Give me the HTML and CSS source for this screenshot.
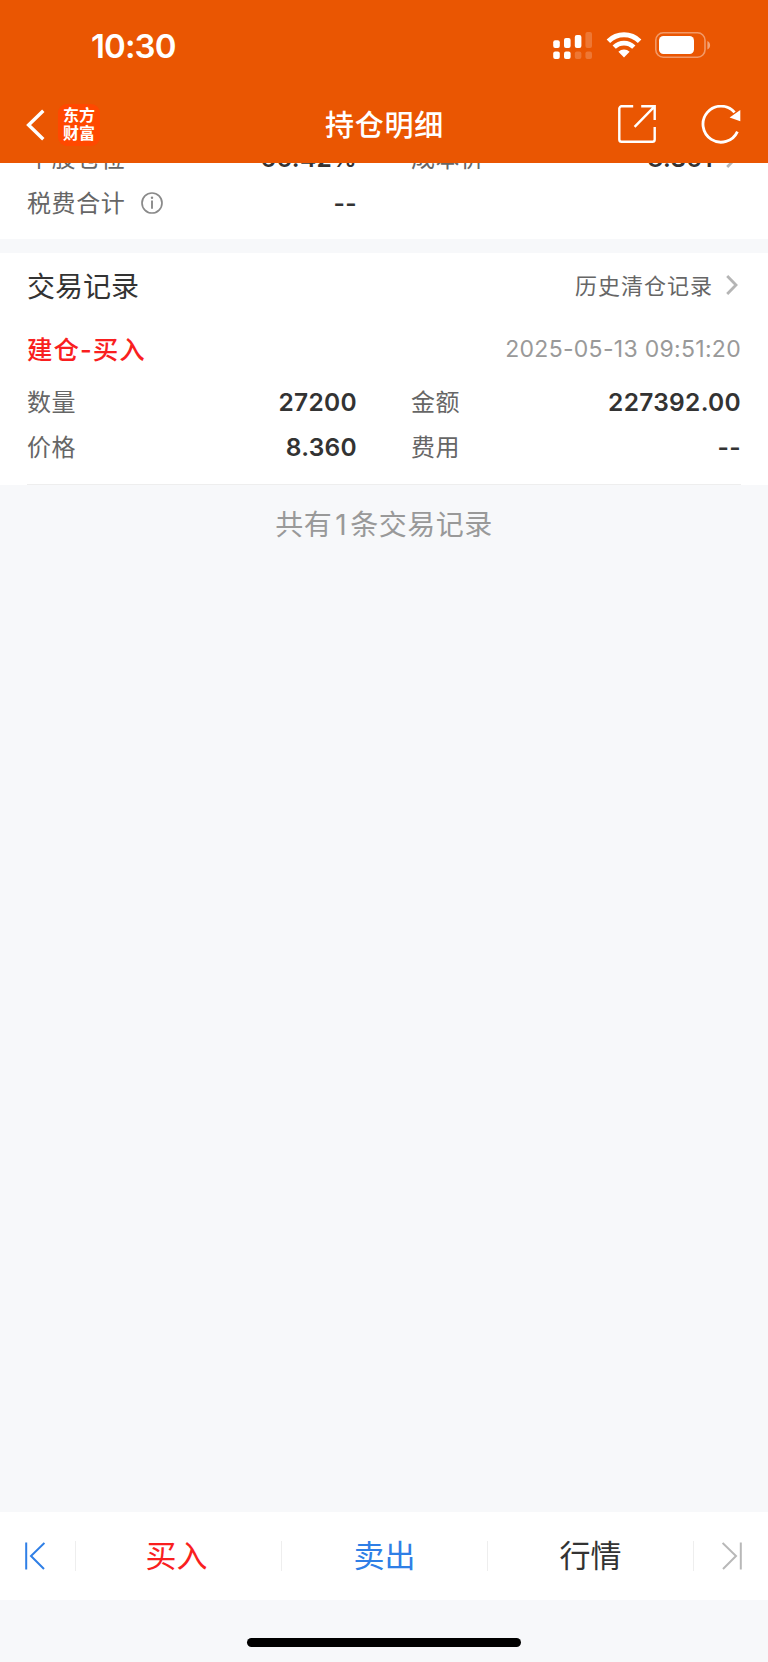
FILE: index.html
```html
<!DOCTYPE html>
<html lang="zh-CN">
<head>
    <meta charset="UTF-8">
    <meta name="viewport" content="width=device-width, initial-scale=1.0">
    <title>持仓明细</title>
    <link rel="stylesheet" href="styles.css">
</head>
<body>
    <div class="page">
        <header class="header">
            <div class="status-bar">
                <span class="time">10:30</span>
                <div class="status-icons">
                    <svg class="signal" width="40" height="28" viewBox="0 0 40 28" fill="#fff">
                        <rect x="0.2" y="8.2" width="6.6" height="7.8" rx="2"/>
                        <rect x="11" y="6" width="6.6" height="10" rx="2"/>
                        <rect x="21.8" y="3" width="6.6" height="13" rx="2"/>
                        <rect x="32.4" y="0" width="6.6" height="16" rx="2" opacity="0.2"/>
                        <rect x="0.2" y="19.6" width="6.6" height="7.4" rx="2"/>
                        <rect x="11" y="19.6" width="6.6" height="7.4" rx="2"/>
                        <rect x="21.8" y="19.6" width="6.6" height="7.4" rx="2" opacity="0.2"/>
                        <rect x="32.4" y="19.6" width="6.6" height="7.4" rx="2" opacity="0.2"/>
                    </svg>
                    <svg class="wifi" width="36" height="26" viewBox="0 0 36 26">
                        <path d="M2.4 9.2a22.2 22.2 0 0 1 31.2 0" fill="none" stroke="#fff" stroke-width="5"/>
                        <path d="M8.2 15.2a13.8 13.8 0 0 1 19.6 0" fill="none" stroke="#fff" stroke-width="4.6"/>
                        <path d="M18 25.4l-5.6-5.6a8.2 8.2 0 0 1 11.2 0z" fill="#fff"/>
                    </svg>
                    <svg class="battery" width="57" height="27" viewBox="0 0 57 27">
                        <rect x="0.8" y="0.8" width="49.2" height="24.4" rx="7.5" fill="none" stroke="#fff" stroke-opacity="0.4" stroke-width="1.6"/>
                        <rect x="4" y="4" width="35" height="18" rx="4.5" fill="#fff"/>
                        <path d="M52.4 9v8.4c3.6-1.4 3.6-7 0-8.4z" fill="#fff" opacity="0.45"/>
                    </svg>
                </div>
            </div>
            <div class="nav-bar">
                <div class="nav-left">
                    <svg width="20" height="32" viewBox="0 0 20 32" fill="none" stroke="#fff" stroke-width="3.4">
                        <path d="M17.3 1.8L2.6 16l14.7 14.2"/>
                    </svg>
                    <div class="logo">东方<br>财富</div>
                </div>
                <h1 class="title">持仓明细</h1>
                <div class="nav-right">
                    <svg width="38" height="38" viewBox="0 0 38 38" fill="none" stroke="#fff" stroke-width="2.4">
                        <path d="M15.2 1.3H3.6a2.3 2.3 0 0 0-2.3 2.3v30.8a2.3 2.3 0 0 0 2.3 2.3h30.8a2.3 2.3 0 0 0 2.3-2.3V22"/>
                        <path d="M23.2 1.3h13.5V15M36.4 1.6L16.6 21.8"/>
                    </svg>
                    <svg class="refresh" width="40" height="39" viewBox="0 0 40 39">
                        <path d="M36.4 26.6A18 18 0 1 1 33.6 7.4" fill="none" stroke="#fff" stroke-width="2.8"/>
                        <path d="M39.3 5v11.2L28.6 12.6z" fill="#fff"/>
                    </svg>
                </div>
            </div>
        </header>

        <main class="content">
            <section class="summary">
                <div class="row">
                    <div class="cell"><span class="label">个股仓位</span><span class="value">66.42%</span></div>
                    <div class="cell">
                        <span class="label">成本价</span>
                        <span class="value">8.361</span>
                        <svg class="arrow" width="12" height="20" viewBox="0 0 12 20" fill="none" stroke="#b5b5b5" stroke-width="2.8">
                            <path d="M1.2 1l8.8 9-8.8 9"/>
                        </svg>
                    </div>
                </div>
                <div class="row">
                    <div class="cell">
                        <span class="label">税费合计</span>
                        <svg class="info" width="22" height="22" viewBox="0 0 22 22">
                            <circle cx="11" cy="11" r="10" fill="none" stroke="#8a8a8a" stroke-width="1.7"/>
                            <circle cx="11" cy="5.8" r="1.2" fill="#8a8a8a"/>
                            <path d="M11 8.6v8.2" stroke="#8a8a8a" stroke-width="1.9"/>
                        </svg>
                        <span class="value">--</span>
                    </div>
                    <div class="cell"></div>
                </div>
            </section>

            <section class="records">
                <div class="records-head">
                    <h2>交易记录</h2>
                    <a class="history"><span>历史清仓记录</span>
                        <svg class="arrow" width="12" height="20" viewBox="0 0 12 20" fill="none" stroke="#b5b5b5" stroke-width="2.8">
                            <path d="M1.2 1l8.8 9-8.8 9"/>
                        </svg>
                    </a>
                </div>
                <div class="record">
                    <div class="record-head">
                        <span class="type">建仓-买入</span>
                        <span class="date">2025-05-13 09:51:20</span>
                    </div>
                    <div class="row">
                        <div class="cell"><span class="label">数量</span><span class="value">27200</span></div>
                        <div class="cell"><span class="label">金额</span><span class="value">227392.00</span></div>
                    </div>
                    <div class="row">
                        <div class="cell"><span class="label">价格</span><span class="value">8.360</span></div>
                        <div class="cell"><span class="label">费用</span><span class="value">--</span></div>
                    </div>
                </div>
            </section>
            <p class="total">共有<span class="count">1</span>条交易记录</p>
        </main>

        <footer class="footer">
            <a class="step">
                <svg width="20" height="28" viewBox="0 0 20 28" fill="none" stroke="#2f7fe6" stroke-width="2">
                    <path d="M1.2 0.5v27M19.4 1L6 14l13 13"/>
                </svg>
            </a>
            <a class="tab buy">买入</a>
            <a class="tab sell">卖出</a>
            <a class="tab">行情</a>
            <a class="step last">
                <svg width="20" height="28" viewBox="0 0 20 28" fill="none" stroke="#b8b8b8" stroke-width="2">
                    <path d="M18.8 0.5v27M0.6 1L14 14L1 27"/>
                </svg>
            </a>
        </footer>
        <div class="home"><div class="home-bar"></div></div>
    </div>
</body>
</html>
```
FILE: styles.css
```css
* {
    box-sizing: border-box;
}
body {
    margin: 0;
    font-family: Inter, "Noto Sans CJK SC", sans-serif;
    background: #f7f8fa;
    color: #333;
}
svg {
    display: block;
    flex: none;
}
.page {
    display: flex;
    flex-direction: column;
    height: 1662px;
}
.header {
    height: 163px;
    background: #ea5602;
    color: #fff;
    flex: none;
}
.status-bar {
    display: flex;
    justify-content: space-between;
    height: 86px;
    padding: 32px 56px 0 91px;
}
.time {
    font-size: 33px;
    font-weight: 600;
    line-height: 29px;
    letter-spacing: -0.9px;
}
.status-icons {
    display: flex;
}
.wifi {
    margin-left: 13px;
}
.battery {
    margin-left: 13px;
}
.nav-bar {
    display: grid;
    grid-template-columns: 1fr auto 1fr;
    align-items: center;
    height: 77px;
    padding: 0 27px 0 26px;
}
.nav-left {
    display: flex;
    align-items: center;
    gap: 12px;
}
.logo {
    width: 42px;
    height: 42px;
    padding-top: 1px;
    border-radius: 9px;
    background: #ff4800;
    font-family: "Noto Sans CJK SC", sans-serif;
    font-size: 16px;
    font-weight: 700;
    line-height: 18px;
    text-align: center;
}
.title {
    margin: 0;
    padding: 0 0 4px 2px;
    font-size: 29px;
    font-weight: 500;
    letter-spacing: 0.8px;
}
.nav-right {
    display: flex;
    justify-content: flex-end;
    gap: 45px;
}
.content {
    flex: 1;
    overflow: hidden;
}
.summary {
    height: 104px;
    margin-top: -28px;
    background: #fff;
}
.row {
    display: grid;
    grid-template-columns: 330px 330px;
    column-gap: 54px;
    padding: 0 27px;
}
.cell {
    display: flex;
    align-items: center;
    height: 45px;
}
.label {
    padding-bottom: 2px;
    color: #666;
    font-size: 24px;
    letter-spacing: 0.6px;
}
.info {
    margin-left: 16px;
}
.value {
    margin-left: auto;
    font-size: 24.5px;
    font-weight: 600;
    letter-spacing: 0.3px;
}
.arrow {
    margin: 0 3px 0 13px;
}
.records {
    margin-top: 14px;
    background: #fff;
}
.records-head {
    display: flex;
    justify-content: space-between;
    align-items: center;
    height: 66px;
    padding: 0 27px 2px;
}
.records-head h2 {
    margin: 0;
    font-size: 28px;
    font-weight: 400;
}
.history {
    display: flex;
    align-items: center;
    color: #666;
    font-size: 22px;
    letter-spacing: 1px;
}
.history span {
    padding-bottom: 3px;
}
.record {
    height: 166px;
}
.record::after {
    content: "";
    display: block;
    height: 1px;
    margin: 15px 27px 0;
    background: #eee;
}
.record-head {
    display: flex;
    justify-content: space-between;
    align-items: center;
    height: 60px;
    padding: 0 27px;
}
.type {
    padding-bottom: 4px;
    color: #f91f1f;
    font-size: 25.5px;
    font-weight: 500;
    letter-spacing: 1px;
}
.date {
    color: #999;
    font-size: 23px;
    letter-spacing: 0.3px;
}
.total {
    margin: 19px 0 0;
    color: #999;
    font-size: 28px;
    line-height: 42px;
    letter-spacing: 0.5px;
    text-align: center;
}
.count {
    margin: 0 3px;
}
.footer {
    display: flex;
    align-items: center;
    height: 88px;
    flex: none;
    background: #fff;
}
.step {
    display: flex;
    width: 75px;
    padding-left: 25px;
}
.step.last {
    padding-left: 28px;
    border-left: 1px solid #eee;
    height: 30px;
    align-items: center;
}
.tab {
    width: 206px;
    height: 30px;
    border-left: 1px solid #eee;
    font-size: 31px;
    line-height: 30px;
    text-align: center;
}
.buy {
    padding-right: 4px;
    color: #f91f1f;
}
.sell {
    color: #2f7fe6;
}
.home {
    height: 62px;
    padding-top: 38px;
    flex: none;
}
.home-bar {
    width: 274px;
    height: 9px;
    margin: 0 auto;
    border-radius: 5px;
    background: #000;
}
```
